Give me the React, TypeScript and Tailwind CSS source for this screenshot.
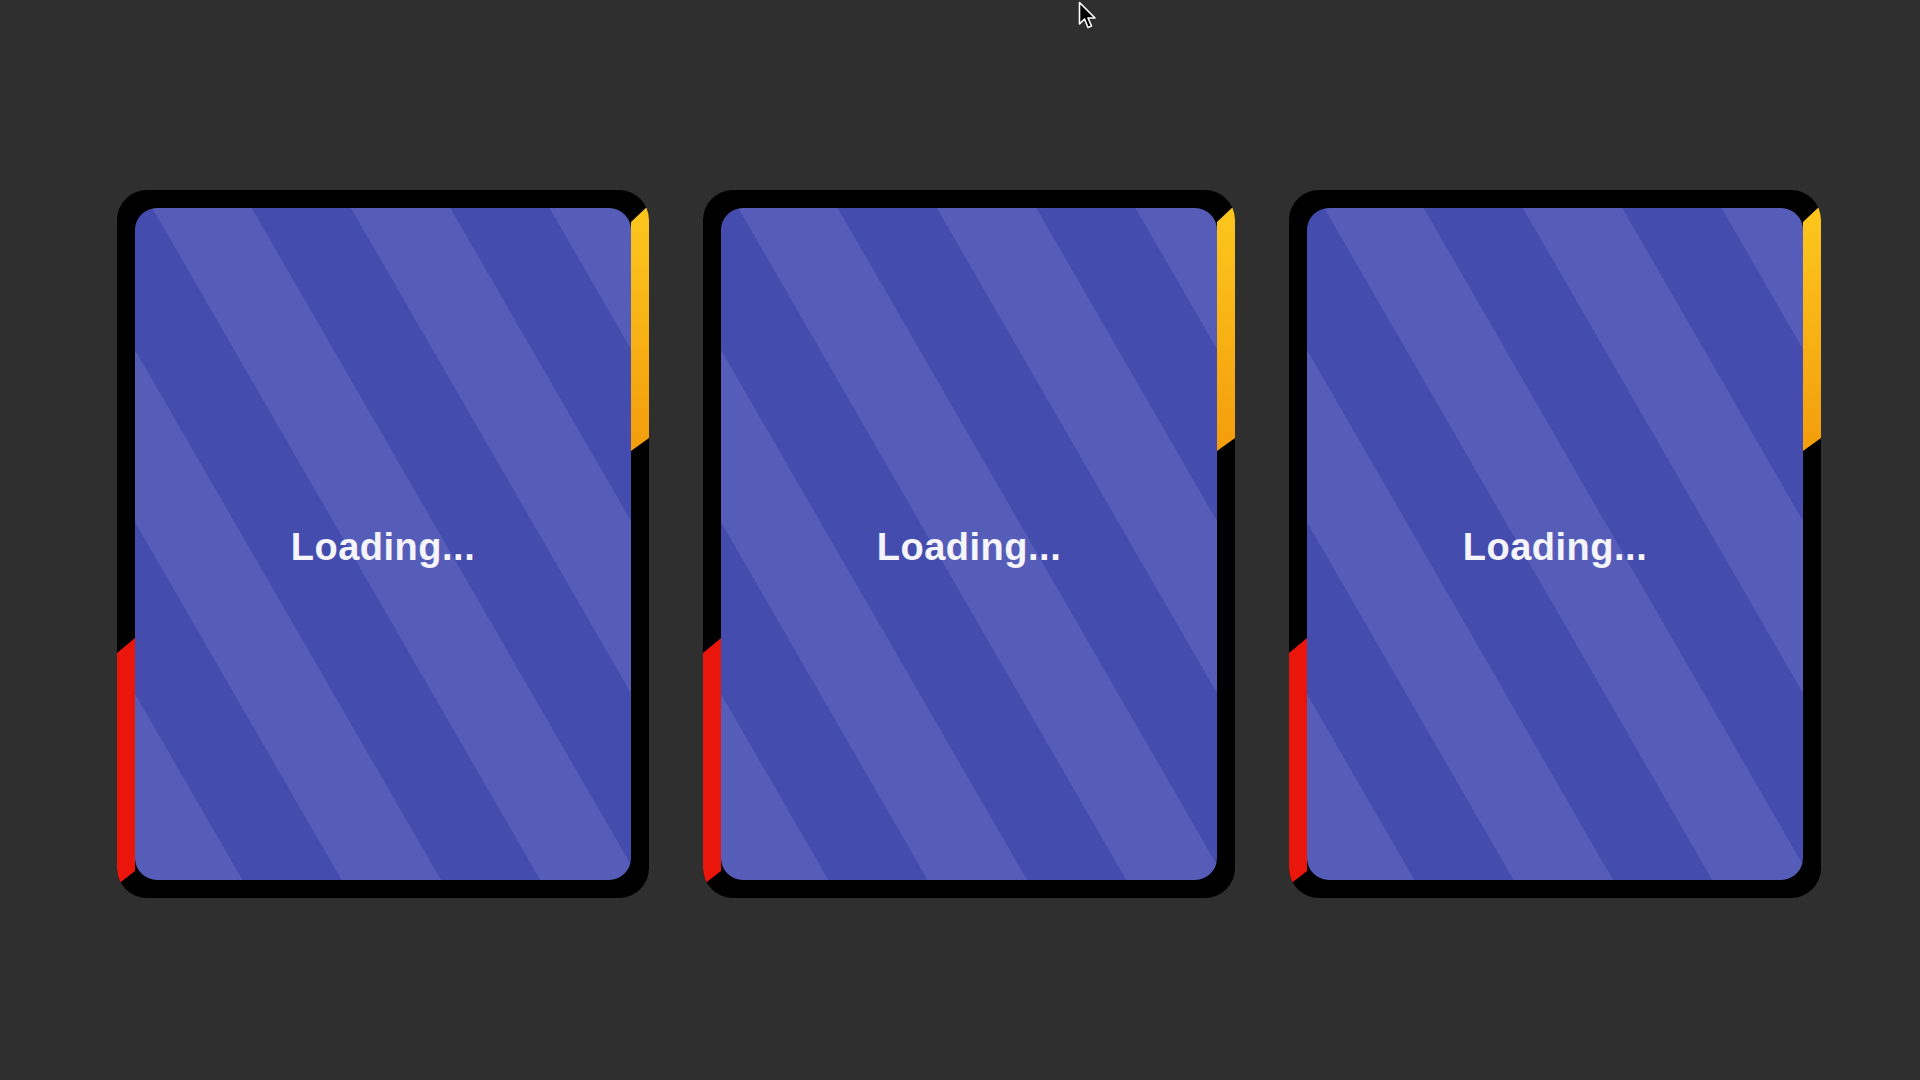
import React from 'react';

const cards = [0, 1, 2];

function LoadingCard() {
  return (
    <div className="relative h-[708px] w-[532px] shrink-0 overflow-hidden rounded-[30px] bg-black p-[18px]">
      {/* progress trims on the frame */}
      <div className="absolute right-0 top-[15px] h-[246px] w-[18px] bg-gradient-to-b from-[#fcc71d] to-[#f39d0b] [clip-path:polygon(0_17px,100%_0,100%_233px,0_246px)]" />
      <div className="absolute left-0 top-0 h-full w-[18px] bg-[#ea160b] [clip-path:polygon(0_463px,100%_448px,100%_681px,0_695px)]" />
      <div className="relative flex h-full w-full items-center justify-center rounded-[22px] bg-[image:repeating-linear-gradient(60deg,#444cae_0px,#444cae_7px,#565db9_7px,#565db9_93px,#444cae_93px,#444cae_172px)] pt-[5px]">
        <span className="text-[38px] font-bold leading-none tracking-[0.5px] text-[#f4f4fa] [font-family:'Liberation_Sans',Arial,sans-serif]">
          Loading...
        </span>
      </div>
    </div>
  );
}

export default function App() {
  return (
    <div className="relative h-screen w-full overflow-hidden bg-[#2f2f2f]">
      <div className="flex gap-[54px] pl-[117px] pt-[190px]">
        {cards.map((c) => (
          <LoadingCard key={c} />
        ))}
      </div>
      {/* mouse pointer */}
      <svg className="absolute left-[1078px] top-[1px]" width="20" height="30" viewBox="0 0 20 30">
        <path d="M1.5 1.5 L1.5 23 L6.5 18 L10 26.5 L13.5 25 L10 17 L17 17 Z" fill="#000" stroke="#fff" strokeWidth="1.6" strokeLinejoin="round" />
      </svg>
    </div>
  );
}
